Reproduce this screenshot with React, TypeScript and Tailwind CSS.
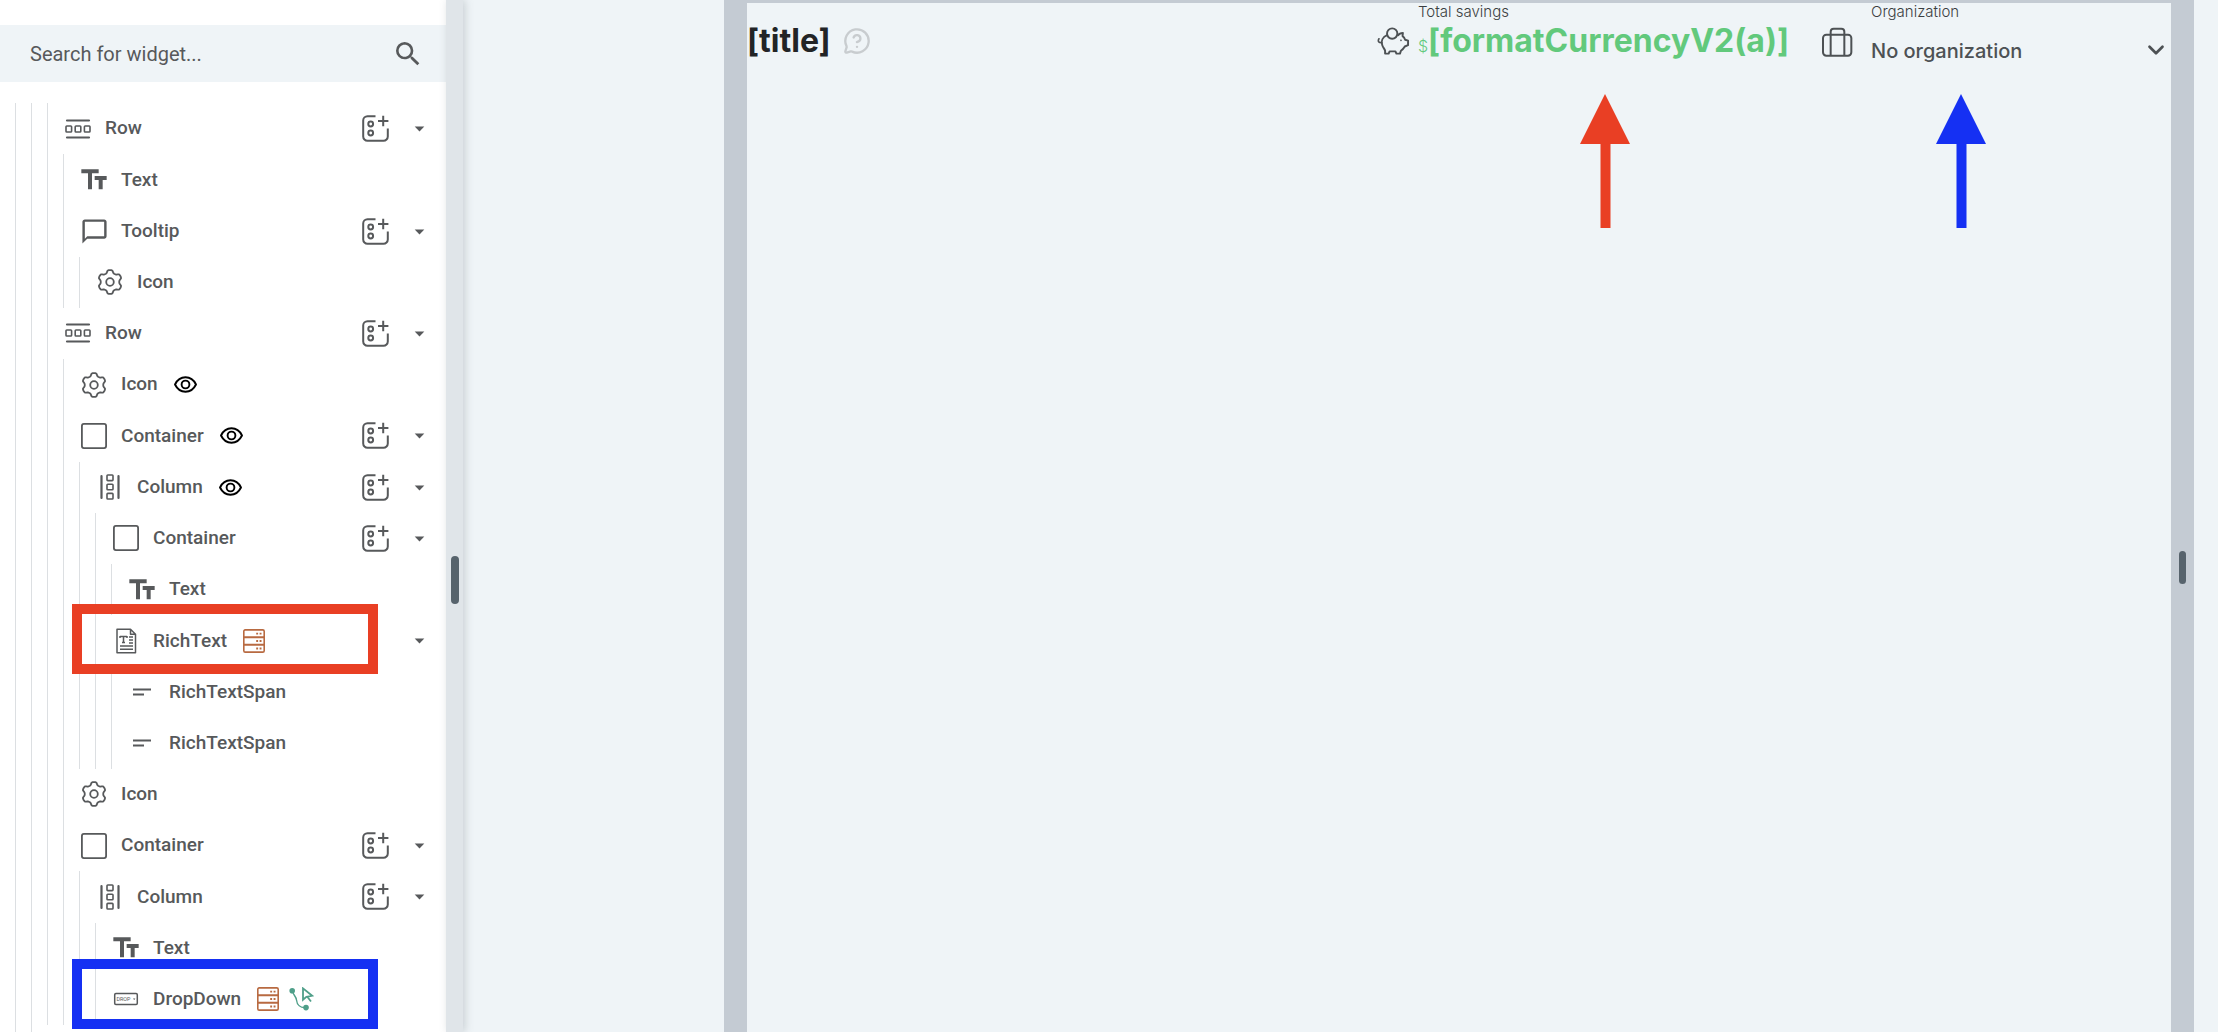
import { ChevronDown, MessageCircleQuestion } from "lucide-react";
import { MdArrowDropDown, MdChatBubbleOutline, MdSearch, MdTextFields } from "react-icons/md";

type Kind = "row" | "text" | "tooltip" | "icon" | "container" | "column" | "rich" | "span" | "dropdown";

type TreeNode = {
  kind: Kind;
  label: string;
  depth: number;
  visible?: boolean; // has a visibility condition
  add?: boolean;
  caret?: boolean;
  query?: boolean;
  action?: boolean;
  frame?: string;
};

const NODES: TreeNode[] = [
  { kind: "row", label: "Row", depth: 1, add: true, caret: true },
  { kind: "text", label: "Text", depth: 2 },
  { kind: "tooltip", label: "Tooltip", depth: 2, add: true, caret: true },
  { kind: "icon", label: "Icon", depth: 3 },
  { kind: "row", label: "Row", depth: 1, add: true, caret: true },
  { kind: "icon", label: "Icon", depth: 2, visible: true },
  { kind: "container", label: "Container", depth: 2, visible: true, add: true, caret: true },
  { kind: "column", label: "Column", depth: 3, visible: true, add: true, caret: true },
  { kind: "container", label: "Container", depth: 4, add: true, caret: true },
  { kind: "text", label: "Text", depth: 5 },
  { kind: "rich", label: "RichText", depth: 4, query: true, caret: true, frame: "-top-[11px] border-[#e93f24]" },
  { kind: "span", label: "RichTextSpan", depth: 5 },
  { kind: "span", label: "RichTextSpan", depth: 5 },
  { kind: "icon", label: "Icon", depth: 2 },
  { kind: "container", label: "Container", depth: 2, add: true, caret: true },
  { kind: "column", label: "Column", depth: 3, add: true, caret: true },
  { kind: "text", label: "Text", depth: 4 },
  { kind: "dropdown", label: "DropDown", depth: 4, query: true, action: true, frame: "-top-[15px] border-[#1530f3]" },
];

// Six rounded teeth around a 26px box
const GEAR_PATH =
  Array.from({ length: 96 }, (_, i) => {
    const a = (i / 96) * Math.PI * 2;
    const r = 10.6 + 1.4 * Math.tanh(2 * Math.cos(6 * (a + Math.PI / 2)) + 0.2);
    return `${i ? "L" : "M"}${(13 + r * Math.cos(a)).toFixed(2)} ${(13 + r * Math.sin(a)).toFixed(2)}`;
  }).join("") + "Z";

function KindIcon({ kind }: { kind: Kind }) {
  if (kind === "text") return <MdTextFields size={32} className="shrink-0" />;
  if (kind === "tooltip") return <MdChatBubbleOutline size={29} className="shrink-0" />;
  return (
    <svg width="26" height="26" viewBox="0 0 26 26" fill="none" stroke="currentColor" strokeWidth="1.8" strokeLinejoin="round" className="shrink-0">
      {kind === "row" && (
        <>
          <path d="M2 4.5h22M2 21.5h22" strokeWidth="2.2" strokeLinecap="round" />
          <rect x="1" y="10" width="5.6" height="6" rx="0.8" strokeWidth="1.6" />
          <rect x="10.2" y="10" width="5.6" height="6" rx="0.8" strokeWidth="1.6" />
          <rect x="19.4" y="10" width="5.6" height="6" rx="0.8" strokeWidth="1.6" />
        </>
      )}
      {kind === "column" && (
        <>
          <path d="M4.5 2v22M21.5 2v22" strokeWidth="2.2" strokeLinecap="round" />
          <rect x="10" y="1" width="6" height="5.6" rx="0.8" strokeWidth="1.6" />
          <rect x="10" y="10.2" width="6" height="5.6" rx="0.8" strokeWidth="1.6" />
          <rect x="10" y="19.4" width="6" height="5.6" rx="0.8" strokeWidth="1.6" />
        </>
      )}
      {kind === "icon" && (
        <>
          <path d={GEAR_PATH} />
          <circle cx="13" cy="13" r="3.8" />
        </>
      )}
      {kind === "container" && <rect x="0.9" y="0.9" width="24.2" height="24.2" rx="2" />}
      {kind === "rich" && (
        <>
          <path d="M4 1.2h13.5l5 5v18.6H4zM17.5 1.2v5h5" strokeWidth="1.5" />
          <path d="M7 8.5h7M10.5 8.5v6M9 14.5h3M7 8v2M14 8v2" strokeWidth="1.5" />
          <path d="M16 9h4M16 12h4M16 15h4M7 18h13M7 21.2h13" strokeWidth="1.4" />
        </>
      )}
      {kind === "span" && <path d="M4 10.5h18M4 15.5h11" strokeWidth="2" />}
      {kind === "dropdown" && (
        <>
          <rect x="1.7" y="7.5" width="22.6" height="11" rx="1.2" strokeWidth="1.5" />
          <text x="3.4" y="15" fontSize="5.4" fill="currentColor" stroke="none" className="font-['Roboto',sans-serif]">
            DROP
          </text>
          <path d="M20 12.6h2.4l-1.2 1.3z" fill="currentColor" stroke="none" />
        </>
      )}
    </svg>
  );
}

function AddIcon() {
  return (
    <svg width="27" height="27" viewBox="0 0 27 27" fill="none" stroke="currentColor" strokeWidth="2">
      <path d="M13.5 1.2H5.5A4.3 4.3 0 0 0 1.2 5.5v16a4.3 4.3 0 0 0 4.3 4.3h16a4.3 4.3 0 0 0 4.3-4.3V13.5" />
      <circle cx="8.7" cy="9" r="2.4" />
      <circle cx="8.7" cy="18" r="2.4" />
      <path d="M21.2 0.8v10.4M16 6h10.4" />
    </svg>
  );
}

function EyeIcon() {
  return (
    <svg width="23" height="17" viewBox="0 0 23 17" fill="none" stroke="#000" strokeWidth="1.9" strokeLinejoin="round">
      <path d="M1 8.5C3.2 4 7 1.3 11.5 1.3S19.8 4 22 8.5c-2.2 4.5-6 7.2-10.5 7.2S3.2 13 1 8.5Z" />
      <circle cx="11.5" cy="8.5" r="3.9" />
    </svg>
  );
}

function QueryIcon() {
  return (
    <svg width="22" height="24" viewBox="0 0 22 24" fill="none" stroke="#b86a41" strokeWidth="1.6">
      <rect x="0.8" y="0.9" width="20.4" height="22.2" rx="1.4" />
      <path d="M1 8.2h20M1 15.8h20" strokeWidth="2" />
      <path d="M13.2 4.6h1.9M16.6 4.6h1.9M13.2 12h1.9M16.6 12h1.9M13.2 19.5h1.9M16.6 19.5h1.9" strokeWidth="1.9" />
    </svg>
  );
}

function ActionIcon() {
  return (
    <svg width="25" height="24" viewBox="0 0 25 24" fill="none" stroke="#4f9f89" strokeWidth="1.4">
      <path d="M3.5 4C4 8 7 9 7.5 13c.5 5 4 8 9 7.6" />
      <circle cx="3.2" cy="3.8" r="2.8" fill="#4f9f89" stroke="none" />
      <circle cx="17" cy="20.6" r="2.8" fill="#4f9f89" stroke="none" />
      <path d="M14 1.4v11.4l3.4-2.9 5.8-1.1zM18.3 9.8l3.7 4.7" strokeWidth="1.8" />
    </svg>
  );
}

function PiggyIcon() {
  return (
    <svg width="33" height="30" viewBox="0 0 102 90" fill="none" stroke="#4d5154" strokeWidth="6" strokeLinejoin="round" strokeLinecap="round" className="shrink-0">
      <circle cx="47" cy="22" r="16" />
      <path d="M31 27C17 33 12 45 16 57c2 8 8 13 9 18v9h11l3-7h18l3 7h11l3-9c6-4 9-8 12-13l10-4V44l-9-3c-2-6-5-9-8-11l1-10c-8 0-12 3-14 7" />
      <path d="M15 50C7 51 1 47 6 38" strokeWidth="5" />
      <circle cx="74" cy="43" r="1" strokeWidth="4" />
    </svg>
  );
}

function SuitcaseIcon() {
  return (
    <svg width="32" height="30" viewBox="0 0 96 90" fill="none" stroke="#4d5154" strokeWidth="6" className="shrink-0">
      <rect x="6" y="23" width="85" height="63" rx="10" />
      <path d="M29 86V14a9 9 0 0 1 9-9h23a9 9 0 0 1 9 9v72" />
    </svg>
  );
}

function Arrow({ className }: { className: string }) {
  return (
    <svg width="50" height="134" viewBox="0 0 50 134" fill="currentColor" className={`absolute top-[91px] -translate-x-1/2 ${className}`}>
      <path d="M25 0l25 50H30.5V134H20.5V50H0z" />
    </svg>
  );
}

function TreeRow({ node }: { node: TreeNode }) {
  return (
    <li className="relative flex items-center pr-[11px]">
      {Array.from({ length: node.depth }, (_, i) => (
        <span key={i} className="w-4 shrink-0 self-stretch border-l border-[#dcdfe2]" />
      ))}
      <span className="flex w-[30px] shrink-0 justify-center">
        <KindIcon kind={node.kind} />
      </span>
      <span className="ml-3 text-[19px] font-medium">{node.label}</span>
      <span className="ml-4 flex items-center gap-2.5">
        {node.visible && <EyeIcon />}
        {node.query && <QueryIcon />}
        {node.action && <ActionIcon />}
      </span>
      <span className="ml-auto flex items-center gap-3.5">
        {node.add && (
          <button type="button" aria-label={`Add to ${node.label}`}>
            <AddIcon />
          </button>
        )}
        {node.caret && (
          <button type="button" aria-label={`Collapse ${node.label}`} className="flex w-8 justify-center">
            <MdArrowDropDown size={23} />
          </button>
        )}
      </span>
      {node.frame && (
        <span className={`pointer-events-none absolute left-[25px] z-10 h-[70px] w-[306px] border-10 ${node.frame}`} />
      )}
    </li>
  );
}

function WidgetTree() {
  return (
    <aside className="flex w-[446px] shrink-0 flex-col bg-white pt-[25px] font-['Roboto',sans-serif] text-[#57595b]">
      <label className="flex h-[57px] shrink-0 items-center bg-[#eff4f7] pr-[22px] pl-[30px]">
        <input
          type="text"
          aria-label="Search for widget"
          placeholder="Search for widget..."
          className="min-w-0 flex-1 bg-transparent text-xl outline-none placeholder:text-[#57595b]"
        />
        <MdSearch size={32} />
      </label>
      <div className="mt-[21px] ml-[15px] flex flex-1 border-l border-[#dcdfe2] pl-[15px]">
        <div className="flex flex-1 border-l border-[#dcdfe2] pb-[7px] pl-[15px]">
          <ul className="grid flex-1 auto-rows-fr">
            {NODES.map((node, i) => (
              <TreeRow key={i} node={node} />
            ))}
          </ul>
        </div>
      </div>
    </aside>
  );
}

function Header() {
  return (
    <header className="flex items-start font-['Inter',sans-serif]">
      <div className="flex items-center gap-3 pt-[18px]">
        <h1 className="text-[32px] leading-10 font-bold text-[#222426]">[title]</h1>
        <MessageCircleQuestion size={28} strokeWidth={2} className="text-[#c8cccf]" />
      </div>

      <div className="ml-auto flex items-start">
        <div className="mt-[23px] mr-2">
          <PiggyIcon />
        </div>
        <div className="relative">
          <p className="text-[15px] leading-[18px] font-light text-[#3b3e41]">Total savings</p>
          <p className="text-[#62c97c]">
            <span className="text-base font-light">$</span>
            <span className="text-[32px] leading-10 font-bold">[formatCurrencyV2(a)]</span>
          </p>
          <Arrow className="left-[187px] text-[#e93f24]" />
        </div>
        <div className="mt-6 mr-[18px] ml-8">
          <SuitcaseIcon />
        </div>
        <div className="relative w-[300px]">
          <label htmlFor="organization" className="block text-[15px] leading-[18px] font-light text-[#3b3e41]">
            Organization
          </label>
          <div className="relative mt-[14px]">
            <select
              id="organization"
              className="w-full appearance-none bg-transparent text-xl leading-8 font-medium text-[#4d5154]"
            >
              <option>No organization</option>
            </select>
            <ChevronDown size={26} strokeWidth={2.5} className="pointer-events-none absolute top-0.5 right-0.5 text-[#4d5154]" />
          </div>
          <Arrow className="left-[90px] text-[#1530f3]" />
        </div>
      </div>
    </header>
  );
}

export default function App() {
  return (
    <div className="flex min-h-screen bg-[#eff4f7]">
      <WidgetTree />
      <div className="z-10 flex w-[17px] shrink-0 items-center justify-center bg-[#e0e5e9] pt-32 shadow-[2px_0_8px_rgba(87,99,108,0.25)]">
        <div className="h-12 w-2 rounded-full bg-[#57636c]" />
      </div>
      <main className="flex min-w-0 flex-1 pr-6 pl-[261px]">
        <div className="w-[23px] shrink-0 bg-[#c4cbd3]" />
        <section className="min-w-0 flex-1 border-t-3 border-[#c4cbd3]">
          <Header />
        </section>
        <div className="flex w-[23px] shrink-0 items-center justify-center bg-[#c4cbd3] pt-[103px]">
          <div className="h-[33px] w-[7px] rounded-full bg-[#57636c]" />
        </div>
      </main>
    </div>
  );
}
